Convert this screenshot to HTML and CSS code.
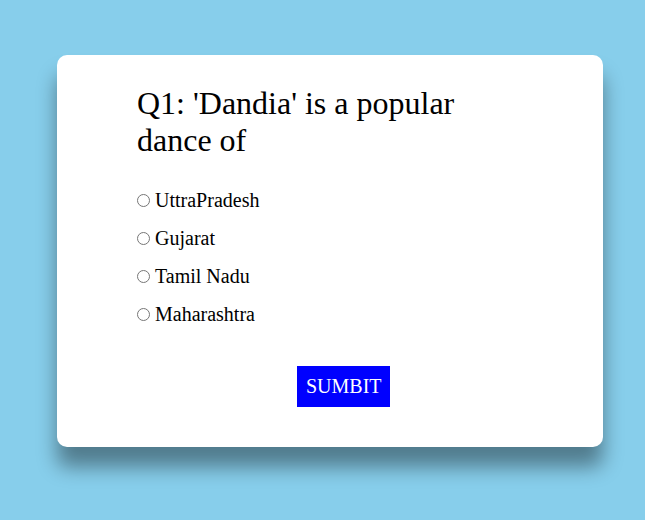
FILE: index.html
```html
<!DOCTYPE html>
<html>
<head>
<meta charset="utf-8">
<link rel="stylesheet" href="styles.css">
</head>
<body>
<div class="card">
  <h1 class="question">Q1: 'Dandia' is a popular dance of</h1>
  <div class="options">
    <label class="option"><input type="radio" name="q1" class="radio">UttraPradesh</label>
    <label class="option"><input type="radio" name="q1" class="radio">Gujarat</label>
    <label class="option"><input type="radio" name="q1" class="radio">Tamil Nadu</label>
    <label class="option"><input type="radio" name="q1" class="radio">Maharashtra</label>
  </div>
  <button class="submit">SUMBIT</button>
</div>
</body>
</html>
```
FILE: styles.css
```css
html, body {
  margin: 0;
  padding: 0;
}
body {
  background: #87ceeb;
  font-family: "Liberation Serif", "Times New Roman", serif;
  color: #000;
  padding-top: 55px;
  height: 520px;
  box-sizing: border-box;
}
.card {
  margin-left: 57px;
  width: 546px;
  box-sizing: border-box;
  background: #fff;
  border-radius: 10px;
  padding: 30px 80px 40px 80px;
  box-shadow: 0 20px 20px rgba(0, 0, 0, 0.4);
  display: flex;
  flex-direction: column;
}
.question {
  margin: 0;
  font-size: 32px;
  font-weight: normal;
}
.options {
  display: flex;
  flex-direction: column;
  gap: 15px;
  margin-top: 30px;
}
.option {
  font-size: 20px;
  display: block;
}
.radio {
  margin: 3px 5px 0 0;
}
.submit {
  align-self: flex-start;
  margin-top: 40px;
  margin-left: 160px;
  background: #0000ff;
  color: #fff;
  border: none;
  font-family: "Liberation Serif", "Times New Roman", serif;
  font-size: 20px;
  padding: 9px 8px 9px 9px;
  line-height: 23px;
}
```
